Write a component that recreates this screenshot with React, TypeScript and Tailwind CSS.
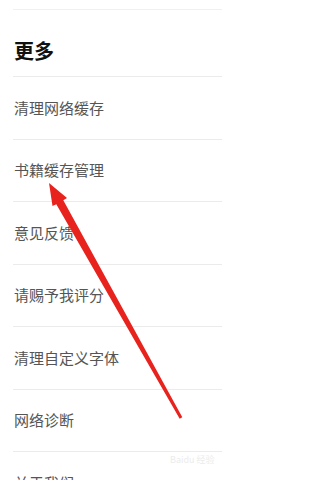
import React from "react";

const items = ["清理网络缓存", "书籍缓存管理", "意见反馈", "请赐予我评分", "清理自定义字体", "网络诊断", "关于我们"];

export default function App() {
  return (
    <div
      className="relative w-[222px] h-[480px] overflow-hidden bg-white"
      style={{ fontFamily: '"Noto Sans CJK SC", "Noto Sans", sans-serif' }}
    >
      <div className="h-[9px]" />
      <div className="ml-[13px] h-px bg-[#f0f0f0]" />
      <div className="pl-[14px] pt-[31px] pb-[15px] text-[20px] leading-[20px] font-bold text-[#111]">更多</div>
      <div className="ml-[13px] h-px bg-[#ebebeb]" />
      {items.map((t) => (
        <div key={t}>
          <div className="h-[61.5px] flex items-center pl-[14px] text-[15px] text-[#555]">{t}</div>
          <div className="ml-[13px] h-px bg-[#ebebeb]" />
        </div>
      ))}
      <div className="absolute left-[170px] top-[455px] text-[9px] text-[#ececec] leading-none">Baidu 经验</div>
      <svg className="absolute left-0 top-0" width="222" height="480" viewBox="0 0 222 480">
        <polygon
          points="49,183 67,198 63.3,200.2 182.3,417.3 179.7,418.7 56.3,204.2 52.5,206"
          fill="#e8231e"
        />
      </svg>
    </div>
  );
}
